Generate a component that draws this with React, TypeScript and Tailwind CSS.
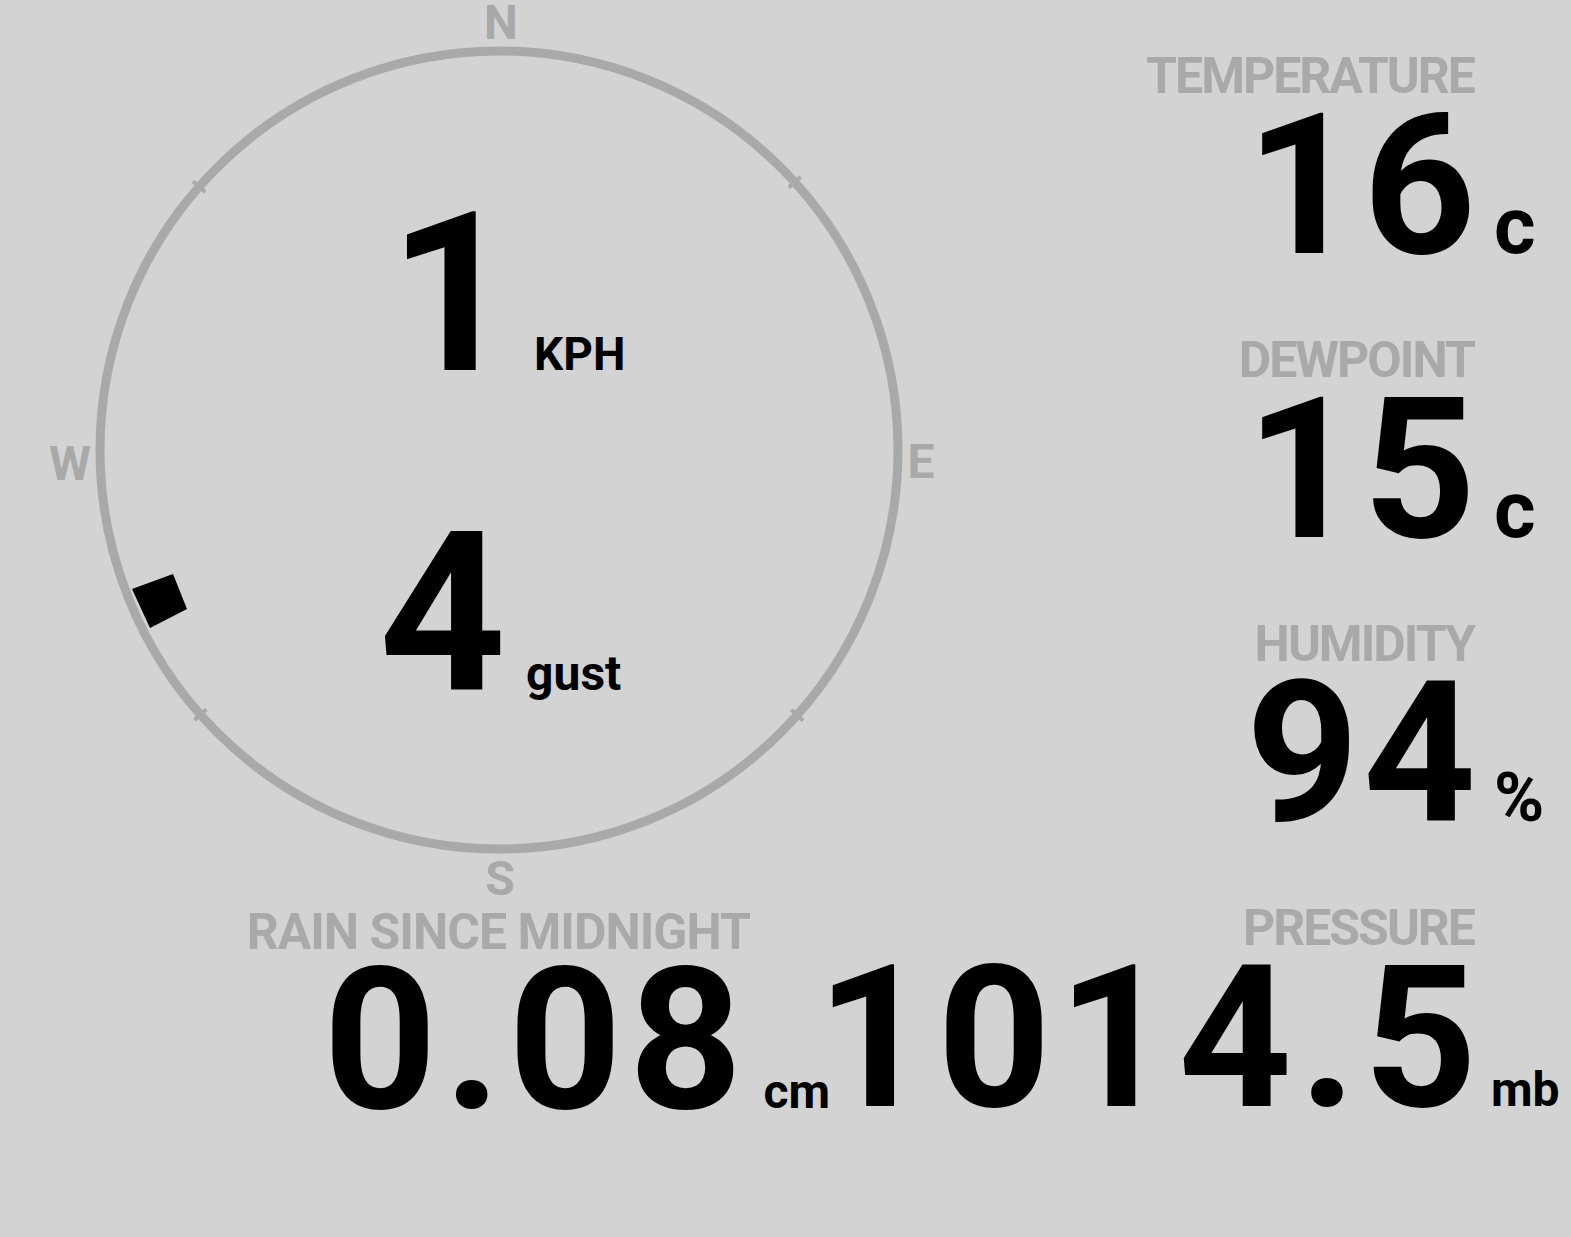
import React from 'react';

type Reading = { label: string; value: string; unit: string; unitSize: string };

const readings: Reading[] = [
  { label: 'TEMPERATURE', value: '16', unit: 'c', unitSize: 'text-[80px]' },
  { label: 'DEWPOINT', value: '15', unit: 'c', unitSize: 'text-[80px]' },
  { label: 'HUMIDITY', value: '94', unit: '%', unitSize: 'text-[68px]' },
];

const CX = 499;
const CY = 450;
const R = 399;

// small notches on the ring, roughly at the diagonals
const notches = [
  [197, 185],
  [797, 180],
  [200, 715],
  [797, 715],
];

function Compass() {
  return (
    <div className="relative w-[1000px] h-[903px] shrink-0">
      <svg className="absolute inset-0" width={1000} height={903} viewBox="0 0 1000 903">
        <circle cx={CX} cy={CY} r={R} fill="none" stroke="#a9a9a9" strokeWidth={9} />
        {notches.map(([x, y]) => {
          const dx = x - CX;
          const dy = y - CY;
          const len = Math.hypot(dx, dy);
          const ux = dx / len;
          const uy = dy / len;
          return (
            <line
              key={`${x}-${y}`}
              x1={CX + ux * (R - 8)}
              y1={CY + uy * (R - 8)}
              x2={CX + ux * (R + 8)}
              y2={CY + uy * (R + 8)}
              stroke="#a9a9a9"
              strokeWidth={4}
            />
          );
        })}
        {/* wind direction marker */}
        <polygon points="132,589 173,574 187,609 150,628" fill="#000" />
      </svg>

      {/* cardinal points */}
      <span className="absolute top-0 left-[501px] -translate-x-1/2 text-[48px] leading-[46px] font-bold text-[#a9a9a9]">N</span>
      <span className="absolute top-[856px] left-[500px] -translate-x-1/2 text-[48px] leading-[46px] font-bold text-[#a9a9a9]">S</span>
      <span className="absolute top-[441px] left-[70px] -translate-x-1/2 text-[48px] leading-[46px] font-bold text-[#a9a9a9]">W</span>
      <span className="absolute top-[439px] left-[921px] -translate-x-1/2 text-[48px] leading-[46px] font-bold text-[#a9a9a9]">E</span>

      {/* speed + gust */}
      <div className="relative flex flex-col pt-[194px] gap-[120px]">
        <div className="flex justify-center items-baseline h-[200px] pl-[14px]">
          <span className="text-[222px] leading-[200px] font-bold">1</span>
          <span className="text-[46px] leading-[50px] font-bold ml-[18px]">KPH</span>
        </div>
        <div className="flex justify-center items-baseline h-[200px]">
          <span className="text-[222px] leading-[200px] font-bold tracking-[6px]">4</span>
          <span className="text-[48px] leading-[50px] font-bold ml-[14px]">gust</span>
        </div>
      </div>
    </div>
  );
}

function ReadingBlock({ label, value, unit, unitSize }: Reading) {
  return (
    <div className="flex flex-col items-end">
      <div className="text-[50px] leading-[50px] font-bold tracking-[-2px] -mr-[2px] text-[#a9a9a9]">{label}</div>
      <div className="flex items-baseline justify-end h-[170px]">
        <span className="text-[197px] leading-[170px] font-bold tracking-[4px] -mr-[8px]">{value}</span>
        <span className="w-0 whitespace-nowrap">
          <span className={`${unitSize} leading-none font-bold ml-[22px]`}>{unit}</span>
        </span>
      </div>
    </div>
  );
}

export default function App() {
  return (
    <div className="w-[1571px] h-[1237px] bg-[#d3d3d3] text-black overflow-hidden font-['Roboto',sans-serif]">
      <div className="flex h-[903px]">
        <Compass />
        <div className="flex-1 min-w-0 flex flex-col gap-[64px] pt-[51px] pr-[99px]">
          {readings.map((r) => (
            <ReadingBlock key={r.label} {...r} />
          ))}
        </div>
      </div>

      <div className="flex">
        {/* rain */}
        <div className="w-[830px] shrink-0 flex flex-col items-end pt-[6px]">
          <div className="text-[50px] leading-[46px] font-bold tracking-[-1px] text-[#a9a9a9] pr-[80px]">RAIN SINCE MIDNIGHT</div>
          <div className="flex items-baseline h-[170px]">
            <span className="text-[198px] leading-[170px] font-bold tracking-[7px]">0.08</span>
            <span className="text-[48px] leading-none font-bold ml-[14px]">cm</span>
          </div>
        </div>

        {/* pressure */}
        <div className="flex-1 min-w-0 flex flex-col items-end pr-[99px]">
          <div className="text-[50px] leading-[50px] font-bold tracking-[-2px] -mr-[2px] text-[#a9a9a9]">PRESSURE</div>
          <div className="flex items-baseline justify-end h-[170px]">
            <span className="text-[198px] leading-[170px] font-bold tracking-[7px] -mr-[12px]">1014.5</span>
            <span className="w-0 whitespace-nowrap">
              <span className="text-[48px] leading-none font-bold ml-[19px]">mb</span>
            </span>
          </div>
        </div>
      </div>
    </div>
  );
}
